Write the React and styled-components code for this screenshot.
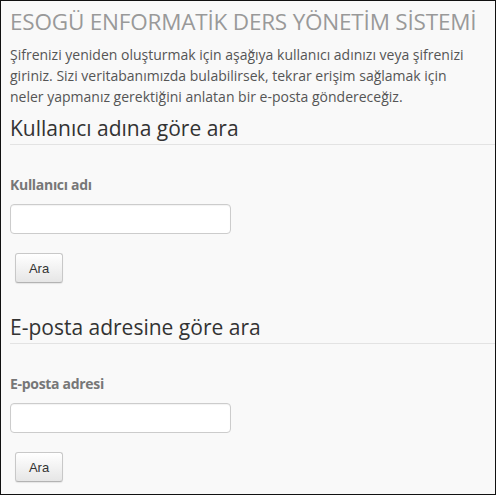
import React from 'react';
import styled, { createGlobalStyle } from 'styled-components';

const GlobalStyle = createGlobalStyle`
    html, body {
        margin: 0;
        padding: 0;
        background: #fff;
    }
    * {
        box-sizing: border-box;
    }
`

const Page = styled.div`
    width: 496px;
    height: 495px;
    border: 1px solid #111;
    background: #f9f9f9;
    font-family: "Open Sans", "Liberation Sans", sans-serif;
    padding: 0 0 0 9px;
    overflow: hidden;
`
const Title = styled.h1`
    margin: 0;
    padding-top: 4px;
    font-size: 22.5px;
    font-weight: 400;
    line-height: 34px;
    color: #999;
    letter-spacing: -0.2px;
    white-space: nowrap;
`
const Intro = styled.p`
    margin: 5px 0 0 0;
    font-size: 14px;
    line-height: 21px;
    color: #555;
    white-space: nowrap;
`
const Section = styled.section`
    display: flex;
    flex-direction: column;
    margin-top: ${p => p.first ? '6px' : '29px'};
`
const Legend = styled.h2`
    margin: 0;
    padding-bottom: 1px;
    font-size: 21px;
    font-weight: 400;
    line-height: 30px;
    color: #333;
    border-bottom: 1px solid #e3e3e3;
`
const Field = styled.div`
    display: flex;
    flex-direction: column;
    align-items: flex-start;
    padding-top: 31px;
`
const Label = styled.label`
    font-size: 14px;
    font-weight: 700;
    line-height: 18px;
    color: #777;
    letter-spacing: -0.3px;
`
const Input = styled.input`
    margin-top: 10px;
    width: 221px;
    height: 30px;
    border: 1px solid #ccc;
    border-radius: 4px;
    background: #fff;
    box-shadow: inset 0 1px 1px rgba(0, 0, 0, 0.05);
`
const Button = styled.button`
    margin: 19px 0 0 5px;
    width: 48px;
    height: 30px;
    padding: 0;
    border: 1px solid #c8c8c8;
    border-bottom-color: #b3b3b3;
    border-radius: 3px;
    background: linear-gradient(to bottom, #ffffff, #e6e6e6);
    box-shadow: 0 1px 1px rgba(0, 0, 0, 0.08);
    font-family: "Liberation Sans", Arial, sans-serif;
    font-size: 13px;
    color: #333;
`

function SearchSection({ first, title, label }) {
    return (
        <Section first={first}>
            <Legend>{title}</Legend>
            <Field>
                <Label>{label}</Label>
                <Input type="text" />
                <Button type="button">Ara</Button>
            </Field>
        </Section>
    )
}

export default function App() {
    return (
        <>
            <GlobalStyle />
            <Page>
                <Title>ESOGÜ ENFORMATİK DERS YÖNETİM SİSTEMİ</Title>
                <Intro>
                    Şifrenizi yeniden oluşturmak için aşağıya kullanıcı adınızı veya şifrenizi<br />
                    giriniz. Sizi veritabanımızda bulabilirsek, tekrar erişim sağlamak için<br />
                    neler yapmanız gerektiğini anlatan bir e-posta göndereceğiz.
                </Intro>
                <SearchSection first title="Kullanıcı adına göre ara" label="Kullanıcı adı" />
                <SearchSection title="E-posta adresine göre ara" label="E-posta adresi" />
            </Page>
        </>
    )
}
